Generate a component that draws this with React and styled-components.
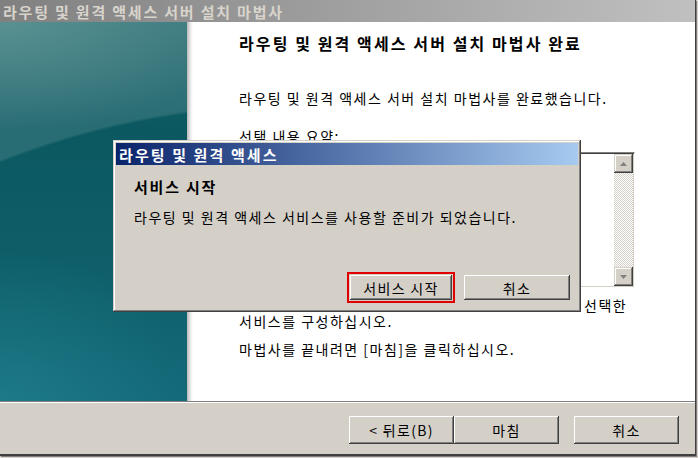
import React from "react";
import styled, { createGlobalStyle } from "styled-components";

const GlobalStyle = createGlobalStyle`
  html, body {
    margin: 0;
    padding: 0;
    width: 698px;
    height: 458px;
    overflow: hidden;
    background: #d4d0c8;
  }
  * {
    box-sizing: border-box;
  }
`;

const FONT = `"Noto Sans CJK KR", "Noto Sans", sans-serif`;

const Screen = styled.div`
  position: relative;
  width: 698px;
  height: 458px;
  background: #d4d0c8;
  font-family: ${FONT};
  font-size: 14px;
  color: #000;
`;

const Window = styled.div`
  width: 696px;
  height: 456px;
  display: flex;
  flex-direction: column;
  border-right: 1px solid #404040;
  border-bottom: 2px solid #404040;
  box-shadow: 1px 1px 0 #808080;
`;

const TitleBar = styled.div`
  height: 22px;
  display: flex;
  align-items: center;
  padding-left: 3px;
  background: linear-gradient(to right, #808080, #c0c0c0);
  color: #d8d4cc;
  font-weight: bold;
  font-size: 15px;
  letter-spacing: 1.8px;
  white-space: nowrap;
`;

const Main = styled.div`
  flex: 1;
  display: flex;
  min-height: 0;
`;

const SidePanel = styled.div`
  width: 187px;
  background:
    radial-gradient(circle 818px at 300px 900px, rgba(0, 0, 0, 0) 816px, rgba(255, 255, 255, 0.12) 819px),
    radial-gradient(ellipse 190px 150px at 0 100%, rgba(50, 160, 168, 0.3), rgba(50, 160, 168, 0)),
    radial-gradient(ellipse 240px 110px at 0 0, rgba(120, 170, 165, 0.4), rgba(120, 170, 165, 0)),
    linear-gradient(to bottom, #1f676c 0, #0b5860 28%, #0e5e68 60%, #14697a 100%);
`;

const Shade = styled.div`
  width: 6px;
  background: linear-gradient(to right, #b8b8b8, #ececec 60%, #fff);
`;

const Content = styled.div`
  flex: 1;
  background: #fff;
  padding: 12px 0 0 46px;
  display: flex;
  flex-direction: column;
  align-items: flex-start;
`;

const Heading = styled.div`
  font-weight: bold;
  font-size: 16px;
  line-height: 18px;
  letter-spacing: 2.1px;
  white-space: nowrap;
`;

const Line = styled.div`
  line-height: 16px;
  letter-spacing: 1.5px;
  white-space: nowrap;
  margin-top: ${(p) => p.$gap || 0}px;
  margin-left: ${(p) => p.$indent || 0}px;
`;

const ListBox = styled.div`
  margin-top: 8px;
  width: 396px;
  height: 136px;
  display: flex;
  justify-content: flex-end;
  border-top: 1px solid #808080;
  border-left: 1px solid #808080;
  border-right: 1px solid #fff;
  border-bottom: 1px solid #fff;
  box-shadow: inset 1px 1px 0 #404040, inset -1px -1px 0 #d4d0c8;
  padding: 1px;
`;

const ScrollBar = styled.div`
  width: 19px;
  display: flex;
  flex-direction: column;
  justify-content: space-between;
  background: repeating-conic-gradient(#fff 0 25%, #d4d0c8 0 50%) 0 0 / 2px 2px;
`;

const ArrowButton = styled.div`
  width: 19px;
  height: 19px;
  background: #d4d0c8;
  display: flex;
  align-items: center;
  justify-content: center;
  box-shadow: inset -1px -1px 0 #404040, inset 1px 1px 0 #d4d0c8, inset -2px -2px 0 #808080, inset 2px 2px 0 #fff;
`;

const Footer = styled.div`
  height: 53px;
  border-top: 1px solid #808080;
  box-shadow: inset 0 1px 0 #fff;
  display: flex;
  align-items: flex-start;
  padding: 14px 0 0 349px;
`;

const Button = styled.button`
  width: ${(p) => p.$w || 105}px;
  height: ${(p) => p.$h || 28}px;
  margin-left: ${(p) => p.$gap || 0}px;
  background: #d4d0c8;
  border: none;
  padding: 0;
  font-family: ${FONT};
  font-size: 14px;
  line-height: 16px;
  letter-spacing: 1.3px;
  color: #000;
  box-shadow: inset -1px -1px 0 #404040, inset 1px 1px 0 #fff, inset -2px -2px 0 #808080, inset 2px 2px 0 #d4d0c8;
  outline: ${(p) => (p.$marked ? "2px solid #e00000" : "none")};
  outline-offset: 1px;
`;

const Dialog = styled.div`
  position: absolute;
  left: 113px;
  top: 140px;
  width: 468px;
  height: 172px;
  background: #d4d0c8;
  padding: 3px;
  display: flex;
  flex-direction: column;
  box-shadow: inset -1px -1px 0 #404040, inset 1px 1px 0 #d4d0c8, inset -2px -2px 0 #808080, inset 2px 2px 0 #fff;
`;

const DialogTitle = styled.div`
  height: 22px;
  display: flex;
  align-items: center;
  padding-left: 3px;
  background: linear-gradient(to right, #0a246a, #a6caf0);
  color: #fff;
  font-weight: bold;
  font-size: 15px;
  letter-spacing: 2.1px;
`;

const DialogBody = styled.div`
  flex: 1;
  padding: 14px 0 0 18px;
  display: flex;
  flex-direction: column;
`;

const DialogHeading = styled.div`
  font-weight: bold;
  font-size: 15px;
  line-height: 16px;
  letter-spacing: 1.8px;
`;

const ButtonRow = styled.div`
  margin-top: auto;
  margin-bottom: 9px;
  display: flex;
  justify-content: flex-end;
  padding-right: 8px;
`;

function Arrow({ down }) {
  return (
    <svg width="7" height="4" viewBox="0 0 7 4">
      <polygon points={down ? "0,0 7,0 3.5,4" : "3.5,0 7,4 0,4"} fill="#808080" />
    </svg>
  );
}

export default function App() {
  return (
    <Screen>
      <GlobalStyle />
      <Window>
        <TitleBar>라우팅 및 원격 액세스 서버 설치 마법사</TitleBar>
        <Main>
          <SidePanel />
          <Shade />
          <Content>
            <Heading>라우팅 및 원격 액세스 서버 설치 마법사 완료</Heading>
            <Line $gap={38}>라우팅 및 원격 액세스 서버 설치 마법사를 완료했습니다.</Line>
            <Line $gap={22}>선택 내용 요약:</Line>
            <ListBox>
              <ScrollBar>
                <ArrowButton>
                  <Arrow />
                </ArrowButton>
                <ArrowButton>
                  <Arrow down />
                </ArrowButton>
              </ScrollBar>
            </ListBox>
            <Line $gap={9} $indent={345}>
              선택한
            </Line>
            <Line>서비스를 구성하십시오.</Line>
            <Line $gap={12}>마법사를 끝내려면 [마침]을 클릭하십시오.</Line>
          </Content>
        </Main>
        <Footer>
          <Button>&lt; 뒤로(B)</Button>
          <Button>마침</Button>
          <Button $gap={15}>취소</Button>
        </Footer>
      </Window>
      <Dialog>
        <DialogTitle>라우팅 및 원격 액세스</DialogTitle>
        <DialogBody>
          <DialogHeading>서비스 시작</DialogHeading>
          <Line $gap={14}>라우팅 및 원격 액세스 서비스를 사용할 준비가 되었습니다.</Line>
          <ButtonRow>
            <Button $w={102} $h={25} $marked>
              서비스 시작
            </Button>
            <Button $w={106} $h={25} $gap={12}>
              취소
            </Button>
          </ButtonRow>
        </DialogBody>
      </Dialog>
    </Screen>
  );
}
